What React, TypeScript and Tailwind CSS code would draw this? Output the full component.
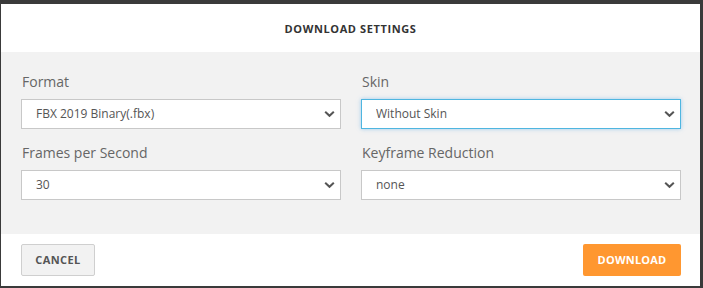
import React, {useState} from "react";

interface FieldProps {
    label: string;
    value: string;
    options: string[];
    focused?: boolean;
    onChange: (v: string) => void;
}

const Chevron = () => (
    <svg width="11" height="7" viewBox="0 0 11 7" className="pointer-events-none absolute right-[6px] top-1/2 -translate-y-1/2">
        <path d="M1.2 1.2 L5.5 5.3 L9.8 1.2" fill="none" stroke="#555" strokeWidth="2" />
    </svg>
);

const Field: React.FC<FieldProps> = ({label, value, options, focused, onChange}) => (
    <div className="flex flex-col">
        <label className="text-[14px] leading-[18px] text-[#666] mb-[8px] pl-[1px]">{label}</label>
        <div className="relative">
            <select
                value={value}
                onChange={(e) => onChange(e.target.value)}
                className={
                    "w-full h-[30px] appearance-none bg-white pl-[14px] pr-8 text-[12px] text-[#555] outline-none border " +
                    (focused
                        ? "border-[#4fb6e0] shadow-[0_0_4px_rgba(102,175,233,0.6)]"
                        : "border-[#c8c8c8]")
                }
            >
                {options.map((o) => (
                    <option key={o} value={o}>{o}</option>
                ))}
            </select>
            <Chevron />
        </div>
    </div>
);

export default function App() {
    const [format, setFormat] = useState("FBX 2019 Binary(.fbx)");
    const [skin, setSkin] = useState("Without Skin");
    const [fps, setFps] = useState("30");
    const [reduction, setReduction] = useState("none");

    return (
        <div
            className="w-[703px] h-[288px] bg-[#3a3a3a] pt-[4px] pl-[1px] pr-[3px] pb-[2px] overflow-hidden"
            style={{fontFamily: '"Open Sans", "Noto Sans", sans-serif'}}
        >
            <div className="h-full bg-white flex flex-col">
                <div className="h-[48px] flex items-center justify-center pt-[2px]">
                    <h2 className="text-[11px] font-bold tracking-[0.6px] text-[#333] uppercase">Download Settings</h2>
                </div>
                <div className="bg-[#f2f2f2] h-[182px] grid grid-cols-2 gap-x-[20px] gap-y-[15px] pl-[20px] pr-[19px] pt-[21px] content-start">
                    <Field
                        label="Format"
                        value={format}
                        options={["FBX 2019 Binary(.fbx)", "FBX 2014 Binary(.fbx)", "Collada(.dae)"]}
                        onChange={setFormat}
                    />
                    <Field
                        label="Skin"
                        value={skin}
                        focused
                        options={["Without Skin", "With Skin"]}
                        onChange={setSkin}
                    />
                    <Field
                        label="Frames per Second"
                        value={fps}
                        options={["24", "30", "60"]}
                        onChange={setFps}
                    />
                    <Field
                        label="Keyframe Reduction"
                        value={reduction}
                        options={["none", "uniform"]}
                        onChange={setReduction}
                    />
                </div>
                <div className="flex-1 flex items-center justify-between pl-[20px] pr-[19px]">
                    <button className="h-[32px] w-[74px] bg-[#f2f2f2] border border-[#cfcfcf] rounded-[2px] text-[11px] font-bold tracking-[0.4px] text-[#555] uppercase">
                        Cancel
                    </button>
                    <button className="h-[32px] w-[98px] bg-[#ff9730] rounded-[2px] text-[11px] font-bold tracking-[0.2px] text-white uppercase">
                        Download
                    </button>
                </div>
            </div>
        </div>
    );
}
